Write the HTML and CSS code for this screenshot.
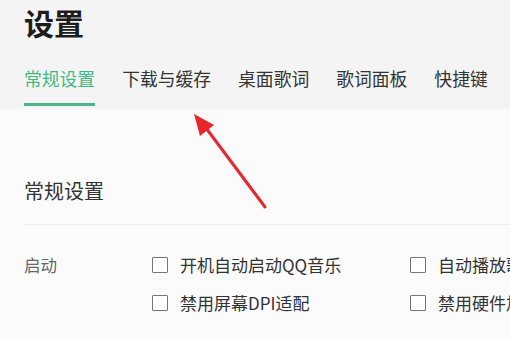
FILE: index.html
```html
<!DOCTYPE html>
<html>
<head>
<meta charset="utf-8">
<link rel="stylesheet" href="styles.css">
</head>
<body>
<div class="page">
  <header class="header">
    <h1 class="title">设置</h1>
    <nav class="tabs">
      <div class="tab active">常规设置</div>
      <div class="tab">下载与缓存</div>
      <div class="tab">桌面歌词</div>
      <div class="tab">歌词面板</div>
      <div class="tab">快捷键</div>
    </nav>
  </header>
  <main class="content">
    <h2 class="section-title">常规设置</h2>
    <div class="divider"></div>
    <div class="group">
      <div class="group-label">启动</div>
      <div class="options">
        <label class="option"><span class="box"></span><span>开机自动启动QQ音乐</span></label>
        <label class="option"><span class="box"></span><span>自动播放歌曲</span></label>
        <label class="option"><span class="box"></span><span>禁用屏幕DPI适配</span></label>
        <label class="option"><span class="box"></span><span>禁用硬件加速</span></label>
      </div>
    </div>
  </main>
  <svg class="arrow" width="510" height="340" viewBox="0 0 510 340">
    <line x1="265" y1="207" x2="203" y2="124" stroke="#e8262e" stroke-width="3" stroke-linecap="round"/>
    <polygon points="194,114 214,125 200,136" fill="#e8262e"/>
  </svg>
</div>
</body>
</html>
```

FILE: styles.css
```css
* { box-sizing: border-box; }
html, body {
  margin: 0;
  padding: 0;
}
body {
  width: 510px;
  height: 340px;
  overflow: hidden;
  background: #fbfbfb;
  font-family: "Noto Sans CJK SC", "Noto Sans", sans-serif;
}
.page {
  position: relative;
  width: 510px;
  height: 340px;
  overflow: hidden;
}
.header {
  background: #f4f4f4;
  height: 109px;
  padding-left: 24px;
  overflow: hidden;
}
.title {
  margin: 0;
  padding-top: 5px;
  font-size: 30px;
  line-height: 34px;
  font-weight: 700;
  color: #1c1c1c;
}
.tabs {
  display: flex;
  gap: 27px;
  margin-top: 28px;
  white-space: nowrap;
}
.tab {
  font-size: 17.8px;
  line-height: 22px;
  color: #333;
  padding-bottom: 14px;
  border-bottom: 3px solid transparent;
}
.tab.active {
  color: #3dba84;
  border-bottom-color: #4cb585;
}
.content {
  padding-left: 24px;
}
.section-title {
  margin: 0;
  padding-top: 69px;
  font-size: 20px;
  line-height: 26px;
  font-weight: 400;
  color: #333;
}
.divider {
  margin-top: 20px;
  height: 1px;
  background: #eeeeee;
}
.group {
  display: flex;
  margin-top: 28px;
}
.group-label {
  flex: none;
  width: 128px;
  font-size: 16.5px;
  line-height: 24px;
  color: #666;
}
.options {
  flex: none;
  display: grid;
  grid-template-columns: 258px 258px;
  row-gap: 14px;
  white-space: nowrap;
}
.option {
  display: flex;
  align-items: center;
  gap: 12px;
  font-size: 17px;
  line-height: 24px;
  color: #333;
}
.box {
  width: 16px;
  height: 16px;
  border: 1.5px solid #777;
  border-radius: 1px;
  background: #fff;
  flex: none;
}
.arrow {
  position: absolute;
  left: 0;
  top: 0;
  pointer-events: none;
}
```
